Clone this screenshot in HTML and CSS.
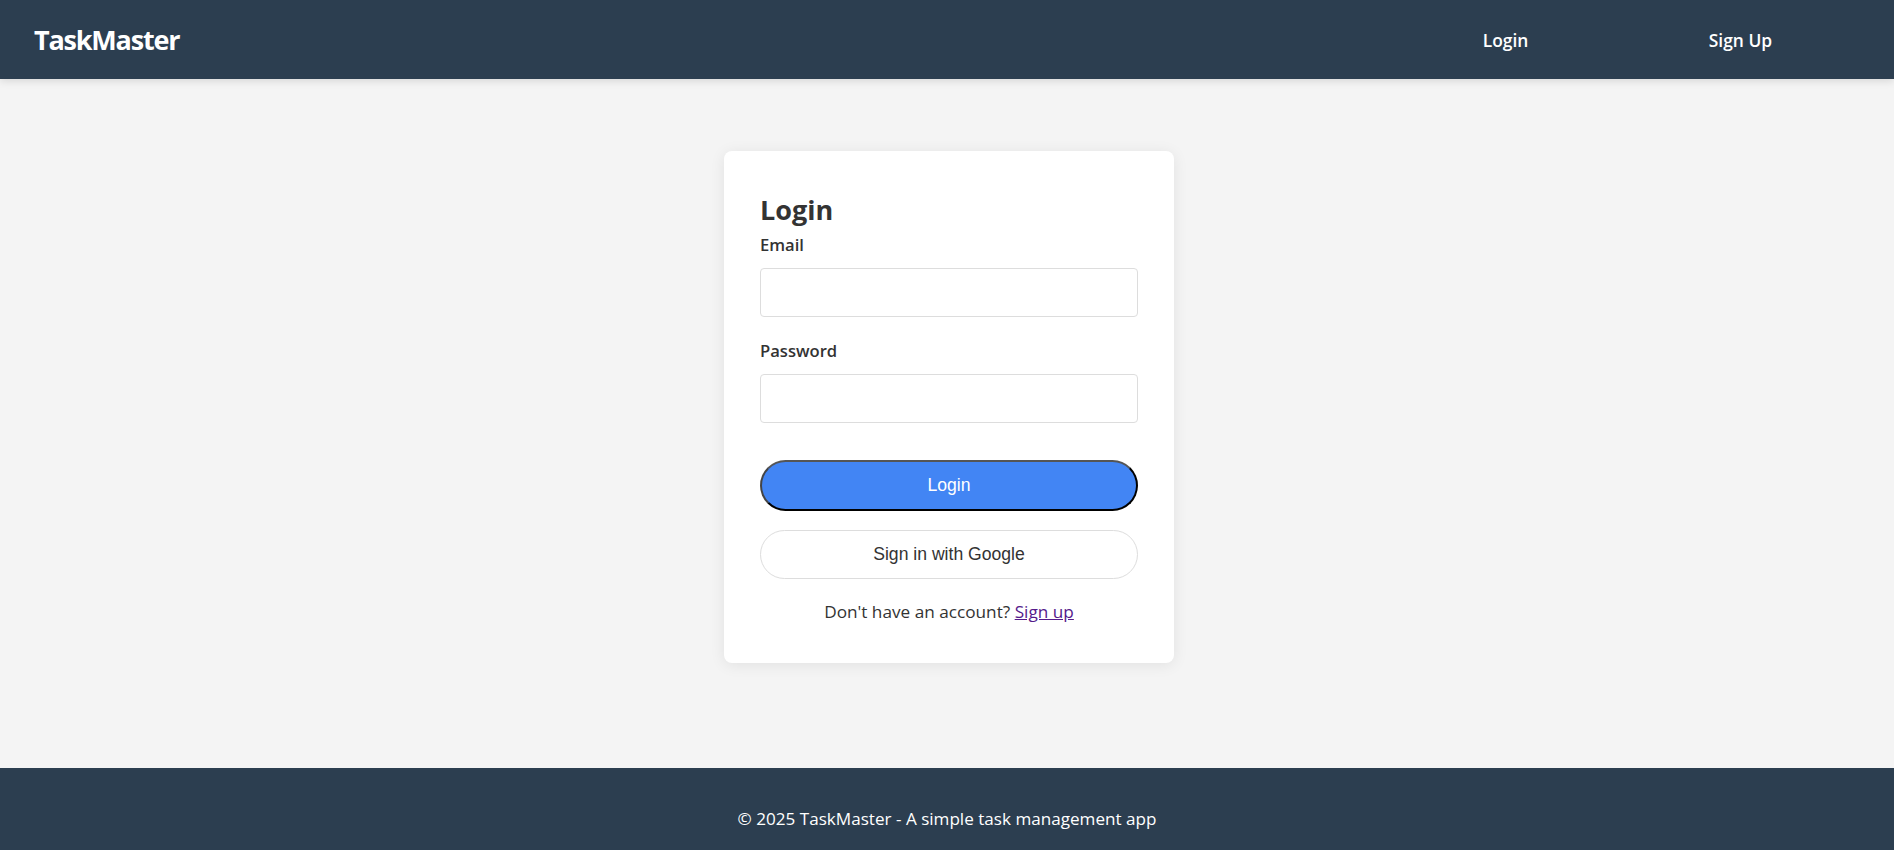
FILE: index.html
```html
<!DOCTYPE html>
<html lang="en">
<head>
<meta charset="utf-8">
<title>TaskMaster - Login</title>
<link rel="stylesheet" href="styles.css">
</head>
<body>
<header class="site-header">
  <div class="logo">TaskMaster</div>
  <nav class="nav">
    <a class="nav-link" href="#">Login</a>
    <a class="nav-link" href="#">Sign Up</a>
  </nav>
</header>
<main class="main">
  <div class="card">
    <h2 class="card-title">Login</h2>
    <label class="field-label" for="email">Email</label>
    <input class="field-input" id="email" type="email">
    <label class="field-label pw" for="password">Password</label>
    <input class="field-input" id="password" type="password">
    <button class="btn btn-primary" type="button">Login</button>
    <button class="btn btn-google" type="button">Sign in with Google</button>
    <p class="switch">Don't have an account? <a class="switch-link" href="#">Sign up</a></p>
  </div>
</main>
<footer class="site-footer">
  <p class="footer-text">© 2025 TaskMaster - A simple task management app</p>
</footer>
</body>
</html>
```
FILE: styles.css
```css
* { box-sizing: border-box; }
html, body { margin: 0; padding: 0; }
body {
  font-family: "Open Sans", "Noto Sans", sans-serif;
  background: #f4f4f4;
  color: #333;
  min-height: 850px;
  display: flex;
  flex-direction: column;
}
.site-header {
  height: 79px;
  background: #2c3e50;
  display: flex;
  align-items: center;
  justify-content: space-between;
  padding: 0 36px 0 34px;
  box-shadow: 0 2px 8px rgba(0,0,0,0.12);
  position: relative;
  z-index: 1;
}
.logo {
  color: #fff;
  font-weight: 700;
  font-size: 27px;
  line-height: 1;
  letter-spacing: -1.2px;
}
.nav { display: flex; }
.nav-link {
  width: 235px;
  text-align: center;
  color: #fff;
  text-decoration: none;
  font-weight: 600;
  font-size: 17.4px;
}
.main {
  flex: 1;
  display: flex;
  justify-content: center;
  align-items: flex-start;
  padding: 72px 0 0 4px;
}
.card {
  width: 450px;
  background: #fff;
  border-radius: 8px;
  box-shadow: 0 2px 15px rgba(0,0,0,0.08);
  padding: 41px 36px 38px;
  display: flex;
  flex-direction: column;
}
.card-title {
  margin: 0 0 7px;
  font-size: 27px;
  line-height: 35px;
  font-weight: 700;
  color: #333;
}
.field-label {
  font-size: 16.6px;
  line-height: 21px;
  font-weight: 600;
  margin-bottom: 13px;
}
.field-label.pw { margin-top: 23px; }
.field-label.pw + .field-input { margin-top: 0; }
.field-input {
  height: 49px;
  border: 1px solid #ddd;
  border-radius: 4px;
  padding: 8px 12px;
  font-size: 16px;
  background: #fff;
}
.btn {
  font-family: "Liberation Sans", Arial, sans-serif;
  font-size: 17.6px;
  border-radius: 26px;
  cursor: pointer;
}
.btn-primary {
  margin-top: 37px;
  height: 51px;
  background: #4285f4;
  color: #fff;
  border: 2px solid #000;
  border-top-color: #555;
  border-left-color: #444;
}
.btn-google {
  margin-top: 19px;
  height: 49px;
  background: #fff;
  color: #333;
  border: 1px solid #ddd;
}
.switch {
  margin: 20px 0 0;
  text-align: center;
  font-size: 17.2px;
  line-height: 26px;
}
.switch-link { color: #551a8b; }
.site-footer {
  height: 82px;
  background: #2c3e50;
  color: #fff;
  padding-top: 38px;
  text-align: center;
}
.footer-text {
  margin: 0;
  font-size: 17.1px;
  line-height: 26px;
}
```
